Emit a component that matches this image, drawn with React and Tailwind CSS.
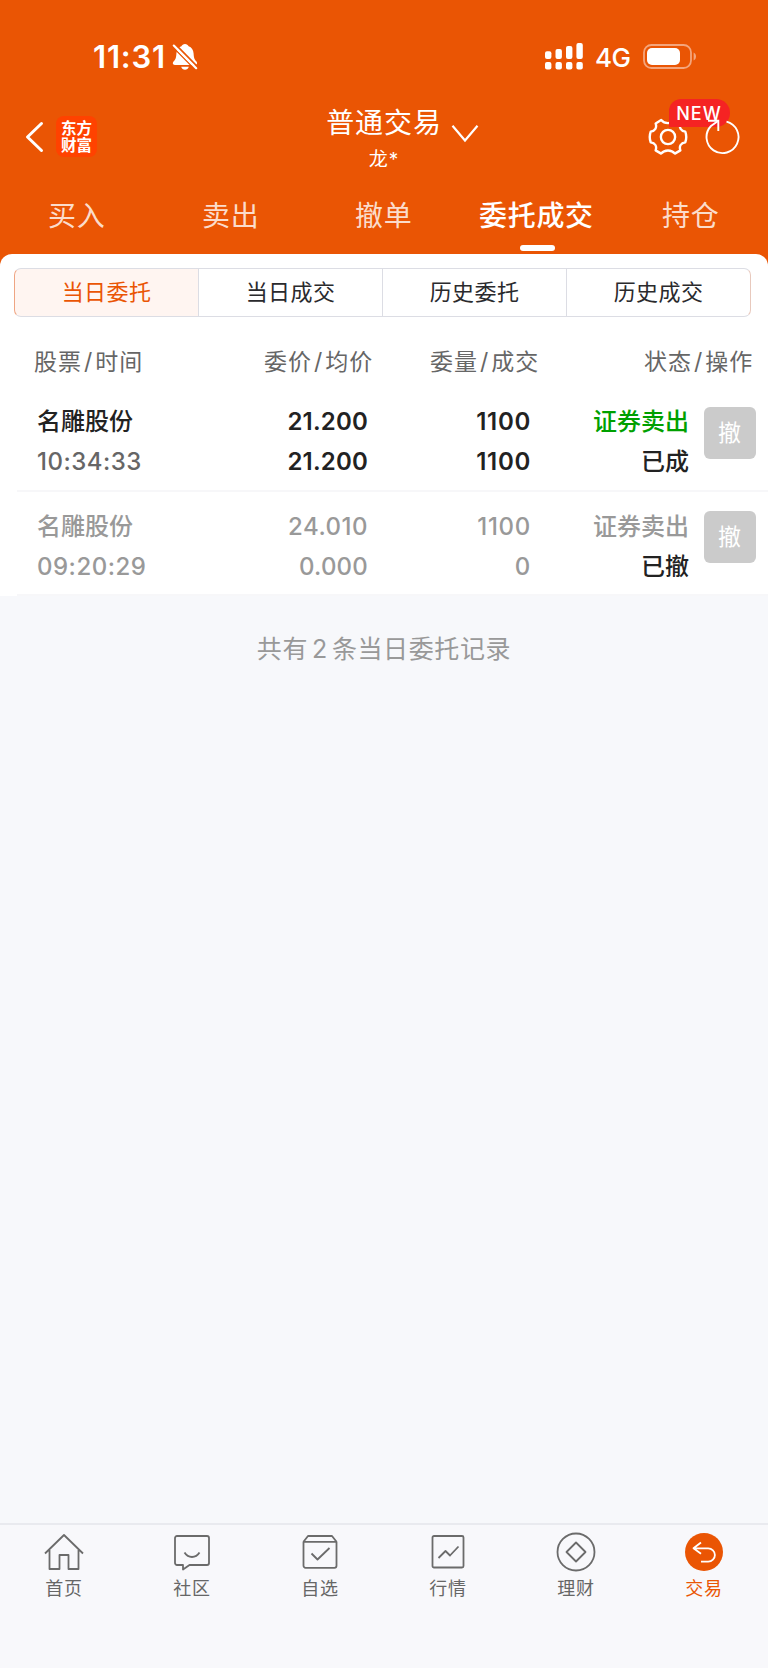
import clsx from "clsx";

const orders = [
    {
        name: "名雕股份", time: "10:34:33", price: "21.200", avg: "21.200",
        amount: "1100", filled: "1100", side: "证券卖出", status: "已成", done: false,
    },
    {
        name: "名雕股份", time: "09:20:29", price: "24.010", avg: "0.000",
        amount: "1100", filled: "0", side: "证券卖出", status: "已撤", done: true,
    },
];

function StatusBar() {
    return (
        <div className="flex h-[83px] items-start text-white">
            <div className="flex w-[384px] pl-[93px] pt-[38px]">
                <span className="w-[79px] text-[31px] leading-[38px] font-semibold tracking-[0.8px]">11:31</span>
                <svg className="mt-[5px]" width="26" height="28" viewBox="0 0 26 28">
                    <path
                        d="M13 1c-1.700 0-3.100 1-3.600 2.300C6.300 4.400 4.600 7.100 4.400 10.500c-.2 4.500-1 6-2.700 7.800C.2 20 .8 22 2.800 22h20.400c2 0 2.500-2 1.100-3.700-1.700-1.800-2.500-3.300-2.700-7.800-.2-3.400-1.900-6.100-5-7.200C16.100 2 14.700 1 13 1zM9.200 23.800c.5 1.800 2 2.900 3.800 2.900s3.300-1.100 3.800-2.900z"
                        fill="white"/>
                    <path d="M3 1l22.400 22.600" stroke="#ea5504" strokeWidth="1.800"/>
                    <path d="M.6 3.800L23 26.400" stroke="#ea5504" strokeWidth="1.400"/>
                    <path d="M1.800 2.600l22.400 22.600" stroke="white" strokeWidth="2.200" strokeLinecap="round"/>
                </svg>
            </div>
            <div className="flex w-[384px] pl-[161px] pt-[43px]">
                <svg width="38" height="27" viewBox="0 0 38 27" fill="white">
                    <rect x="0" y="8.200" width="6.400" height="7.800" rx="2"/>
                    <rect x="10.500" y="6" width="6.400" height="10" rx="2"/>
                    <rect x="21" y="3" width="6.400" height="13" rx="2"/>
                    <rect x="31.400" y="0" width="6.400" height="16" rx="2"/>
                    <rect x="0" y="19" width="6.400" height="7.400" rx="2"/>
                    <rect x="10.500" y="19" width="6.400" height="7.400" rx="2"/>
                    <rect x="21" y="19" width="6.400" height="7.400" rx="2"/>
                    <rect x="31.400" y="19" width="6.400" height="7.400" rx="2"/>
                </svg>
                <span className="ml-[12px] w-[48px] text-[26px] leading-[29px] font-medium tracking-[-0.6px]">4G</span>
                <svg width="54" height="26" viewBox="0 0 54 26">
                    <rect x="1" y="2" width="47" height="23" rx="7.500" fill="none" stroke="#f4a57c" strokeWidth="1.800"/>
                    <rect x="4" y="5" width="33" height="17" rx="5" fill="white"/>
                    <path d="M50.600 9.500c3.200 1.200 3.200 6.800 0 8z" fill="#f4a57c"/>
                </svg>
            </div>
        </div>
    );
}

function NavBar() {
    return (
        <div className="flex h-[98px] text-white">
            <div className="flex w-[256px] items-start pl-[25px] pt-[33px]">
                <svg className="mt-[5px]" width="20" height="32" viewBox="0 0 20 32">
                    <path d="M16.500 2.500L2.500 16l14 13.500" fill="none" stroke="white" strokeWidth="3" strokeLinecap="round"
                          strokeLinejoin="round"/>
                </svg>
                <div
                    className="ml-[11px] flex h-[41px] w-[41px] flex-col justify-center rounded-[8px] bg-[#ff4200] pl-[5px] text-[15.5px] leading-[17px] font-bold">
                    <span>东方</span>
                    <span>财富</span>
                </div>
            </div>
            <div className="flex w-[256px] items-start pl-[70px] pt-[20px]">
                <div className="flex w-[116px] flex-col items-center">
                    <span className="text-[28px] leading-[40px] tracking-[0.9px] whitespace-nowrap">普通交易</span>
                    <span className="mt-[2px] text-[19px] leading-[30px] tracking-[1px]">龙*</span>
                </div>
                <svg className="ml-[9px] mt-[21px]" width="28" height="19" viewBox="0 0 28 19">
                    <path d="M1.500 1.800L14 16.500 26.500 1.800" fill="none" stroke="white" strokeWidth="2.200"/>
                </svg>
            </div>
            <div className="relative flex w-[256px] items-start pl-[136px] pt-[35px]">
                <svg width="40" height="38" viewBox="0 0 42 40" fill="none" stroke="white" strokeWidth="2.500"
                     strokeLinejoin="round">
                    <path
                        d="M13.800 2.200l-5.800 3.500c1.500 4.500-.5 7.800-5.200 8.600-1.400 3.800-1.400 7.400 0 11.200 4.700.8 6.700 4.100 5.200 8.600l5.800 3.400c3.500-4.300 10.900-4.300 14.400 0l5.800-3.400c-1.500-4.500.5-7.800 5.200-8.600 1.400-3.800 1.400-7.400 0-11.200-4.700-.8-6.700-4.100-5.200-8.600l-5.800-3.500c-3.500 4.300-10.900 4.300-14.400 0z"/>
                    <circle cx="21" cy="20" r="7.500"/>
                </svg>
                <span
                    className="absolute left-[156.5px] top-[16px] flex h-[28px] w-[61px] items-center justify-center rounded-tl-[12px] rounded-r-[14px] bg-[#f52323] text-[18px] font-medium tracking-[1px]">
                    NEW
                </span>
                <svg className="relative ml-[15px]" width="38" height="38" viewBox="0 0 38 38" fill="none"
                     stroke="white" strokeWidth="1.900">
                    <path d="M23.500 3.600A16 16 0 1 1 8 8L15 3"/>
                    <path d="M5 2.700h10.300V13"/>
                </svg>
            </div>
        </div>
    );
}

function Tabs() {
    return (
        <div className="flex h-[73px] pt-[15px] text-[28px] leading-[40px] tracking-[0.7px] text-[#fbdccb]">
            <span className="w-[154px] pl-[48px]">买入</span>
            <span className="w-[153px] pl-[48px]">卖出</span>
            <span className="w-[154px] pl-[48px]">撤单</span>
            <div className="w-[154px] pl-[18px] text-white">
                <div className="font-medium whitespace-nowrap">委托成交</div>
                <div className="mt-[9px] ml-[41px] h-[6px] w-[35px] rounded-full bg-white"></div>
            </div>
            <span className="w-[153px] pl-[47px]">持仓</span>
        </div>
    );
}

function Segments() {
    const items = ["当日委托", "当日成交", "历史委托", "历史成交"];
    return (
        <div className="ml-[14px] mr-[17px] mt-[13px] flex h-[49px] text-[22px] tracking-[0.4px] text-[#2a2a2d]">
            {items.map((item, i) => (
                <div
                    key={item}
                    className={clsx(
                        "flex flex-1 items-center justify-center border-y border-[#dcdde4]",
                        i === 0 && "rounded-l-[7px] border-l border-l-[#efa583] bg-[#fff5f1] text-[#ea5504]",
                        i > 0 && "border-l bg-white",
                        i === 3 && "rounded-r-[7px] border-r border-r-[#e8c9bd]"
                    )}
                >
                    {item}
                </div>
            ))}
        </div>
    );
}

function HeadCell({top, bottom, className}) {
    return (
        <span className={clsx("pl-[34px] whitespace-nowrap", className)}>
            {top}<span className="mx-[2px]">/</span>{bottom}
        </span>
    );
}

function OrderRow({order}) {
    const tone = order.done ? "text-[#999999]" : "text-[#222222]";
    return (
        <div className={clsx("ml-[17px] flex h-[104.5px] border-b-2 border-[#f7f7f9] pt-[15px] text-[24px] leading-[40px] font-medium", tone)}>
            <div className="w-[171px] pl-[20px]">
                <div>{order.name}</div>
                <div className={clsx("tracking-[0.5px]", !order.done && "text-[#666666]")}>{order.time}</div>
            </div>
            <div className="w-[180px] text-right tracking-[0.2px] font-semibold">
                <div className={clsx(order.done && "font-medium tracking-[0.5px]")}>{order.price}</div>
                <div className={clsx(order.done && "font-medium")}>{order.avg}</div>
            </div>
            <div className={clsx("w-[163px] text-right tracking-[0.7px]", order.done ? "font-medium" : "font-semibold")}>
                <div>{order.amount}</div>
                <div>{order.filled}</div>
            </div>
            <div className="w-[158px] text-right">
                <div className={clsx(!order.done && "text-[#00a000]")}>{order.side}</div>
                <div className="text-[#222222]">{order.status}</div>
            </div>
            <button
                className="ml-[14.5px] mt-[4.500px] h-[52px] w-[52px] rounded-[6px] bg-[#cbcbcb] text-[23px] leading-[52px] font-normal text-white">
                撤
            </button>
        </div>
    );
}

function HomeIcon() {
    return (
        <>
            <path d="M1 20.500L20 2l19 18.500M5.500 17v19h10V22h9v14h10V17"/>
        </>
    );
}

function CommunityIcon() {
    return (
        <>
            <path d="M5 3h30a2 2 0 0 1 2 2v25a2 2 0 0 1-2 2H17.500l-6.500 4.500V32H5a2 2 0 0 1-2-2V5a2 2 0 0 1 2-2z"/>
            <path d="M12.500 19.500c3.800 6 11.200 6 15 0"/>
        </>
    );
}

function WatchIcon() {
    return (
        <>
            <path d="M3.500 8.800h33v24a2 2 0 0 1-2 2h-29a2 2 0 0 1-2-2zM3.500 8.800L8 3h24l4.500 5.800"/>
            <path d="M11.500 20.500l6 6L29.500 15"/>
        </>
    );
}

function MarketIcon() {
    return (
        <>
            <rect x="4.500" y="3" width="31" height="31.500" rx="1.500"/>
            <path d="M10.500 25l7-7 4.500 4.500 8.500-9"/>
        </>
    );
}

function WealthIcon() {
    return (
        <>
            <circle cx="20" cy="19" r="18.500"/>
            <path d="M20 9.500L29.500 19 20 28.500 10.500 19z"/>
        </>
    );
}

function TradeIcon() {
    return (
        <>
            <circle cx="20" cy="19" r="19" fill="#ea5504" stroke="none"/>
            <path d="M17 9.500l-7.500 5.800 7.500 5.500M10 15.300h14.200a6.700 6.700 0 0 1 0 13.400H17" stroke="white"/>
        </>
    );
}

const navItems = [
    {label: "首页", Icon: HomeIcon},
    {label: "社区", Icon: CommunityIcon},
    {label: "自选", Icon: WatchIcon},
    {label: "行情", Icon: MarketIcon},
    {label: "理财", Icon: WealthIcon},
    {label: "交易", Icon: TradeIcon, active: true},
];

function BottomNav() {
    return (
        <div className="flex h-[145px] border-t-2 border-[#e9eaef] bg-[#f8f8fb]">
            {navItems.map(({label, Icon, active}) => (
                <div key={label} className="flex flex-1 flex-col items-center pt-[7.5px]">
                    <svg className="overflow-visible" width="40" height="40" viewBox="0 0 40 40" fill="none"
                         stroke="#6b6b6b" strokeWidth="1.800" strokeLinejoin="round">
                        <Icon/>
                    </svg>
                    <span className={clsx("mt-[2.5px] text-[18px] leading-[28px] tracking-[0.8px]", active ? "text-[#ea5504]" : "text-[#666666]")}>
                        {label}
                    </span>
                </div>
            ))}
        </div>
    );
}

export default function App() {
    return (
        <div className="flex h-[1669px] w-[768px] flex-col bg-[#f7f8fb] font-['Inter','Noto_Sans_CJK_SC',sans-serif]">
            <div className="bg-[#ea5504]">
                <StatusBar/>
                <NavBar/>
                <Tabs/>
                <div className="rounded-t-[12px] bg-white pb-[2px] pt-px">
                    <Segments/>
                    <div className="flex h-[68px] pt-[25px] text-[23px] leading-[40px] tracking-[1px] text-[#666666]">
                        <HeadCell className="w-[230px]" top="股票" bottom="时间"/>
                        <HeadCell className="w-[166px]" top="委价" bottom="均价"/>
                        <HeadCell className="w-[214px]" top="委量" bottom="成交"/>
                        <HeadCell top="状态" bottom="操作"/>
                    </div>
                </div>
            </div>
            <div className="bg-white">
                {orders.map(order => <OrderRow key={order.time} order={order}/>)}
            </div>
            <div className="pt-[33px] text-center text-[25px] leading-[40px] tracking-[0.6px] text-[#999999]">
                共有<span className="mx-[4px]">2</span>条当日委托记录
            </div>
            <div className="flex-1"></div>
            <BottomNav/>
            <div className="h-px bg-white"></div>
        </div>
    );
}
